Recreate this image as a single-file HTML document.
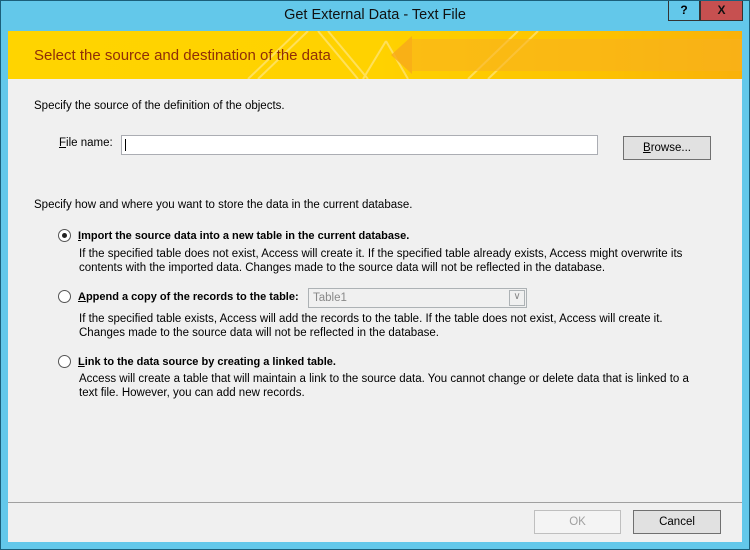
<!DOCTYPE html>
<html><head><style>
*{margin:0;padding:0;box-sizing:border-box}
body{width:750px;height:550px;background:#63c8ea;font-family:"Liberation Sans",sans-serif;font-size:11.5px;color:#000;position:relative;overflow:hidden}
.frame{position:absolute;left:0;top:0;width:750px;height:550px;border:1px solid #1b5f7a}
.title{position:absolute;top:7px;left:0;width:750px;text-align:center;font-size:14.5px;color:#111}
.help{position:absolute;left:668px;top:1px;width:32px;height:20px;border:1px solid #333;border-top:none;text-align:center;font-weight:bold;font-size:12px;line-height:18px}
.close{position:absolute;left:700px;top:1px;width:43px;height:20px;background:#c75050;border:1px solid #333;border-top:none;text-align:center;font-weight:bold;font-size:12px;line-height:18px;color:#111}
.client{position:absolute;left:8px;top:31px;width:734px;height:511px;background:#f0f0f0}
.banner{position:absolute;left:0;top:0;width:734px;height:48px;background:linear-gradient(90deg,#ffd400 0%,#ffd200 50%,#fcc200 80%,#f9b10a 100%);overflow:hidden}
.banner span{position:absolute;left:26px;top:16px;font-size:15px;color:#8f2e08}
.abs{position:absolute}
.btn{position:absolute;border:1px solid #707070;background:#e1e1e1;text-align:center;font-size:11.5px}
.radio{position:absolute;width:13px;height:13px;border-radius:50%;border:1px solid #555;background:#fff}
.b{font-weight:bold;font-size:11px}
</style></head><body>
<div class="frame"></div>
<div class="title">Get External Data - Text File</div>
<div class="help">?</div>
<div class="close">X</div>
<div class="client">
 <div class="banner">
  <svg width="734" height="48" style="position:absolute;left:0;top:0">
   <g stroke="#ffe680" stroke-width="2" fill="none" opacity=".7">
    <line x1="240" y1="48" x2="290" y2="0"/><line x1="250" y1="48" x2="300" y2="0"/>
    <line x1="310" y1="0" x2="350" y2="48"/><line x1="320" y1="0" x2="360" y2="48"/>
    <line x1="355" y1="48" x2="378" y2="10"/><line x1="378" y1="10" x2="400" y2="48"/>
    <line x1="460" y1="48" x2="510" y2="0"/><line x1="480" y1="48" x2="530" y2="0"/>
   </g>
   <polygon points="383,24 404,5 404,43" fill="#f7a81b" opacity=".8"/>
   <rect x="404" y="8" width="330" height="32" fill="#f8b020" opacity=".6"/>
  </svg>
  <span>Select the source and destination of the data</span>
 </div>
 <div class="abs" style="left:26px;top:69px">Specify the source of the definition of the objects.</div>
 <div class="abs" style="left:51px;top:106px"><u>F</u>ile name:</div>
 <div class="abs" style="left:113px;top:104px;width:477px;height:20px;background:#fff;border:1px solid #abadb3"><div style="position:absolute;left:3px;top:3px;width:1px;height:12px;background:#000"></div></div>
 <div class="btn" style="left:615px;top:105px;width:88px;height:24px;line-height:22px"><u>B</u>rowse...</div>
 <div class="abs" style="left:26px;top:168px">Specify how and where you want to store the data in the current database.</div>
 <div class="radio" style="left:50px;top:198px"><div style="position:absolute;left:3px;top:3px;width:5px;height:5px;border-radius:50%;background:#222"></div></div>
 <div class="abs b" style="left:70px;top:199px"><u>I</u>mport the source data into a new table in the current database.</div>
 <div class="abs" style="left:71px;top:216px;line-height:14px">If the specified table does not exist, Access will create it. If the specified table already exists, Access might overwrite its<br>contents with the imported data. Changes made to the source data will not be reflected in the database.</div>
 <div class="radio" style="left:50px;top:259px"></div>
 <div class="abs b" style="left:70px;top:260px"><u>A</u>ppend a copy of the records to the table:</div>
 <div class="abs" style="left:300px;top:257px;width:219px;height:20px;border:1px solid #adb2b5;background:#f0f0f0;color:#888;padding:3px 4px">Table1<div style="position:absolute;right:1px;top:1px;width:16px;height:16px;border:1px solid #adb2b5;color:#888;text-align:center;line-height:12px;font-size:10px">&#8744;</div></div>
 <div class="abs" style="left:71px;top:281px;line-height:14px">If the specified table exists, Access will add the records to the table. If the table does not exist, Access will create it.<br>Changes made to the source data will not be reflected in the database.</div>
 <div class="radio" style="left:50px;top:324px"></div>
 <div class="abs b" style="left:70px;top:325px"><u>L</u>ink to the data source by creating a linked table.</div>
 <div class="abs" style="left:71px;top:341px;line-height:14px">Access will create a table that will maintain a link to the source data. You cannot change or delete data that is linked to a<br>text file. However, you can add new records.</div>
 <div class="abs" style="left:0;top:471px;width:734px;height:1px;background:#a0a0a0"></div>
 <div class="btn" style="left:526px;top:479px;width:87px;height:24px;line-height:22px;background:#f4f4f4;border-color:#bfbfbf;color:#a0a0a0">OK</div>
 <div class="btn" style="left:625px;top:479px;width:88px;height:24px;line-height:22px">Cancel</div>
</div>
</body></html>
